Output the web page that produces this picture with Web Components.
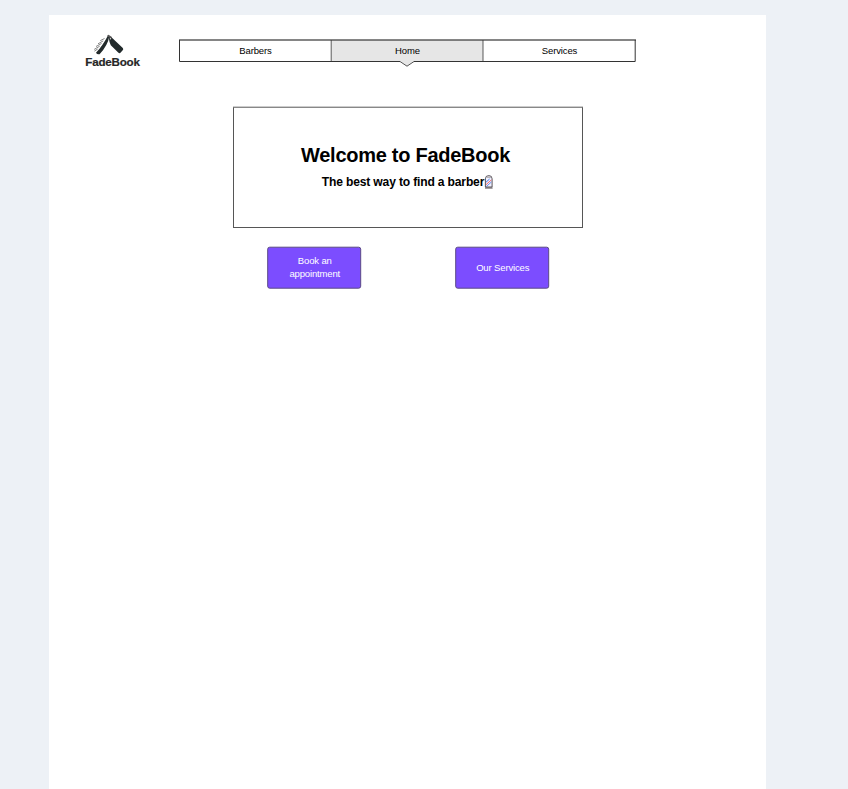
<!DOCTYPE html>
<html lang="en">
<head>
<meta charset="utf-8">
<title>FadeBook</title>
<style>
html,body{margin:0;height:100%;overflow:hidden}
body{background:#edf1f6;font-family:"Liberation Sans",Arial,sans-serif;color:#000}
</style>
</head>
<body>
<fade-page>
  <fade-header slot="header">
    <fade-logo slot="logo">FadeBook</fade-logo>
    <fade-nav slot="nav"><span>Barbers</span><span>Home</span><span>Services</span></fade-nav>
  </fade-header>
  <fade-hero><span slot="title">Welcome to FadeBook</span><span slot="subtitle">The best way to find a barber</span><barber-pole slot="icon"></barber-pole></fade-hero>
  <fade-actions>
    <fade-button>Book an appointment</fade-button>
    <fade-button>Our Services</fade-button>
  </fade-actions>
</fade-page>
<script>
function define(name, html) {
  const t = document.createElement('template');
  t.innerHTML = html;
  customElements.define(name, class extends HTMLElement {
    constructor() {
      super();
      this.attachShadow({mode: 'open'}).append(t.content.cloneNode(true));
    }
  });
}
define('fade-page', `<style>
:host{display:block;box-sizing:border-box;height:100vh;padding:15px 82px 0 49px}
main{height:100%;background:#fff;display:flex;flex-direction:column}
</style><main><slot name="header"></slot><slot></slot></main>`);
define('fade-header', `<style>
:host{display:flex;align-items:flex-start;height:92px;padding:0 0 0 34px;flex:none;box-sizing:border-box}
.logo{width:96px;padding-top:19px}.nav{padding-top:24px}
</style><div class="logo"><slot name="logo"></slot></div><div class="nav"><slot name="nav"></slot></div>`);
define('fade-logo', `<style>
:host{display:flex;flex-direction:column;align-items:center;width:59px;font-weight:700;font-size:11.6px;line-height:13px;color:#262626;white-space:nowrap}
svg{display:block;margin-right:7px}
span{letter-spacing:-.2px;-webkit-text-stroke:.2px #262626}
</style><svg width="32" height="21" viewBox="0 0 32 21">
<path d="M15 1.4 L16.3 2.4 Q14.8 11.2 6.6 20.2 Q4 20.8 3 18.7 Q9.4 12 15 1.4Z" fill="#222a2b"/>
<path d="M15.9 2.4 L18.7 3.6 L29.8 14 Q30.8 15.3 29.7 16.3 L27.2 19 Q26.2 19.5 25.2 18.5 L17.8 11.2 Q16.2 8 15.9 4.5Z" fill="#222a2b"/>
<path d="M15.4 1.8 L18 3.5" stroke="#555" stroke-width="2" stroke-linecap="round"/>
<circle cx="17.4" cy="4.7" r=".7" fill="#ddd"/>
<path d="M11.5 4.5 L7.3 6.6 M10.2 6.9 L5 9.8 M8.5 9.5 L3 12.5 M6.7 12.2 L1.2 15.4 M4.7 15 L1.4 17.1" stroke="#777" stroke-width=".9"/>
</svg><span><slot></slot></span>`);
define('fade-nav', `<style>
:host{display:grid;grid-template-columns:repeat(3,152px);height:23px;position:relative;font-size:9.5px;letter-spacing:-.14px;line-height:24px;text-align:center}
svg{position:absolute;left:0;top:0;z-index:0;overflow:visible}
::slotted(span){position:relative;z-index:1;padding-left:1px}
</style><svg width="457" height="29" viewBox="0 0 457 29">
<rect x="152.5" y="1" width="151.5" height="21.5" fill="#e6e6e6"/>
<path d="M221 22 L228 27.5 L235 22Z" fill="#e6e6e6"/>
<path d="M0 1 H457" stroke="#333" stroke-opacity=".6" stroke-width="2"/>
<path d="M.5 1 V22.5 H221 M235 22.5 H456.2 V1" fill="none" stroke="#333"/>
<path d="M221 22.5 L228 27.2 L235 22.5" fill="none" stroke="#555"/>
<path d="M152.2 1 V22 M304 1 V22" stroke="#333" stroke-opacity=".8"/>
</svg><slot></slot>`);
define('fade-hero', `<style>
:host{display:flex;flex:none;flex-direction:column;box-sizing:border-box;width:350px;height:121px;margin-left:184px;border:1px solid #565656;border-top-color:#888;box-shadow:0 -1px 0 #ccc;padding-top:35px;align-items:center}
h1{margin:0;font-size:20px;letter-spacing:-.27px;line-height:24px;font-weight:700;white-space:nowrap;padding-right:5px}
p{margin:0;font-size:12.1px;letter-spacing:-.17px;line-height:14px;font-weight:700;display:flex;align-items:center;padding-top:8px;white-space:nowrap}
</style><h1><slot name="title"></slot></h1><p><slot name="subtitle"></slot><slot name="icon"></slot></p>`);
define('barber-pole', `<style>:host{display:block;width:10px;height:14px}svg{display:block}</style>
<svg width="10" height="14" viewBox="0 0 10 14">
<path d="M1.4 12V3.8Q1.4 .6 4.8 .6Q8.1 .6 8.1 3.8V12Z" fill="#eef0ff" stroke="#4a4348" stroke-width=".9"/>
<path d="M2 3 Q2.5 1.2 4.8 1.2Q7 1.2 7.5 3Z" fill="#b9b6b9"/>
<path d="M2 7.2L5.6 4" stroke="#4b77e6"/>
<path d="M2.2 11.6L7.4 7" stroke="#4b77e6" stroke-width=".8"/>
<path d="M2 9.7L7.4 4.9" stroke="#ef6970"/>
<path d="M1 13H8.6" stroke="#4a4348"/>
</svg>`);
define('fade-actions', `<style>
:host{display:flex;flex:none;gap:94px;margin:19px 0 0 218px}
</style><slot></slot>`);
define('fade-button', `<style>
:host{display:block;width:94px;height:42px}
svg{display:block;overflow:visible}
.face{display:grid;width:94px;height:42px}
.face>*{grid-area:1/1}
button{width:100%;height:100%;border:0;background:none;color:#fff;font:9.5px/13px "Liberation Sans",Arial,sans-serif;letter-spacing:-.14px;padding:0 15px 2px 16.5px;text-align:center}
</style><div class="face"><svg width="94" height="42"><rect x=".7" y=".2" width="93" height="41" rx="2" fill="#7c4dff" stroke="#5b4a85"/></svg><button><slot></slot></button></div>`);
</script>
</body>
</html>
